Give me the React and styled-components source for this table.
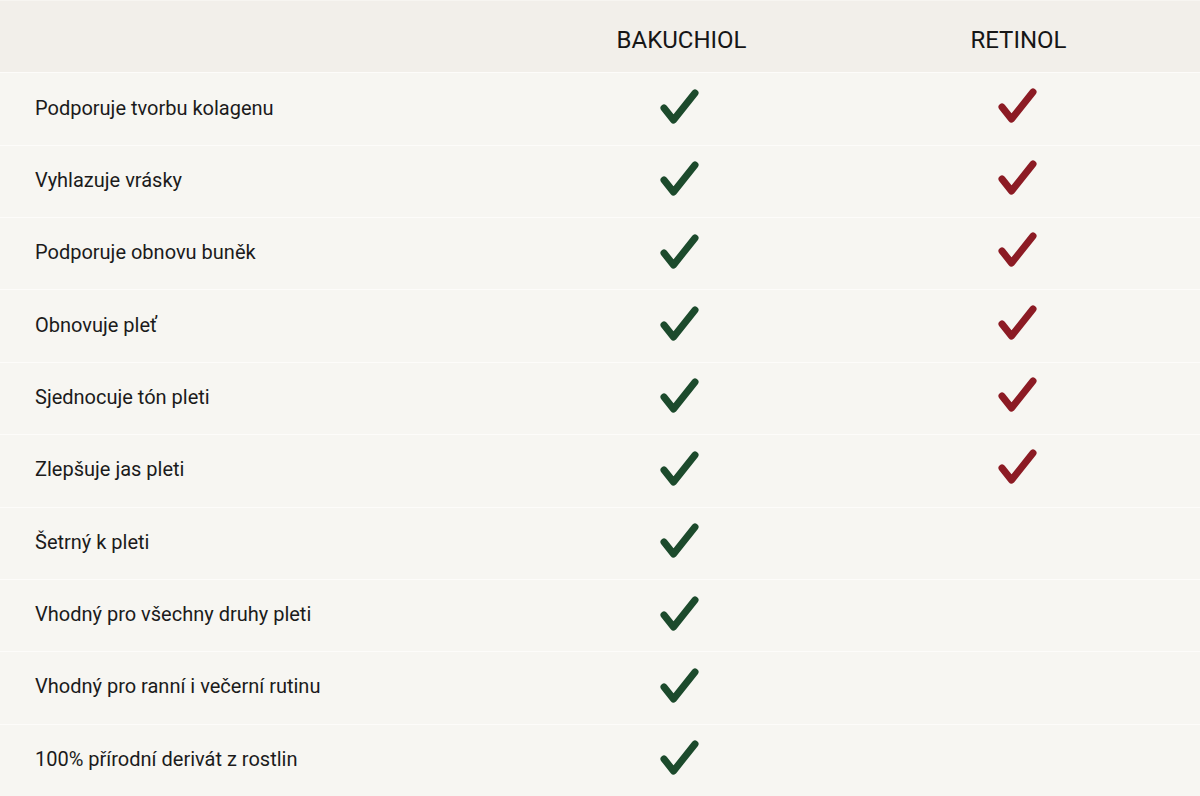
import styled, { createGlobalStyle } from "styled-components"

const rows = [
  { label: "Podporuje tvorbu kolagenu", bakuchiol: true, retinol: true },
  { label: "Vyhlazuje vrásky", bakuchiol: true, retinol: true },
  { label: "Podporuje obnovu buněk", bakuchiol: true, retinol: true },
  { label: "Obnovuje pleť", bakuchiol: true, retinol: true },
  { label: "Sjednocuje tón pleti", bakuchiol: true, retinol: true },
  { label: "Zlepšuje jas pleti", bakuchiol: true, retinol: true },
  { label: "Šetrný k pleti", bakuchiol: true, retinol: false },
  { label: "Vhodný pro všechny druhy pleti", bakuchiol: true, retinol: false },
  { label: "Vhodný pro ranní i večerní rutinu", bakuchiol: true, retinol: false },
  { label: "100% přírodní derivát z rostlin", bakuchiol: true, retinol: false },
]

function Check({ color }) {
  return (
    <svg width="40" height="38" viewBox="0 0 40 38">
      <path
        d="M5 20 L14.5 32 L36 5"
        fill="none"
        stroke={color}
        strokeWidth="7"
        strokeLinecap="round"
        strokeLinejoin="round"
      />
    </svg>
  )
}

export default function App() {
  return (
    <>
      <GlobalStyle />
      <Table>
        <HeaderRow>
          <Cell />
          <HeadCell>BAKUCHIOL</HeadCell>
          <HeadCell>RETINOL</HeadCell>
        </HeaderRow>
        {rows.map(r => (
          <Row key={r.label}>
            <Label>{r.label}</Label>
            <MarkCell $shift={-6} $lift={4}>{r.bakuchiol && <Check color="#1c4a2c" />}</MarkCell>
            <MarkCell $shift={-4} $lift={7}>{r.retinol && <Check color="#8c1b24" />}</MarkCell>
          </Row>
        ))}
      </Table>
    </>
  )
}

const GlobalStyle = createGlobalStyle`
  html, body {
    margin: 0;
    padding: 0;
    background: #f7f6f2;
  }
  body {
    font-family: Roboto, "Liberation Sans", sans-serif;
    color: #1b1b1b;
  }
`
const Table = styled.div`
  display: flex;
  flex-direction: column;
  height: 796px;
  width: 1200px;
`
const Row = styled.div`
  flex: 1;
  display: grid;
  grid-template-columns: 1fr 337px 337px;
  padding-right: 13px;
  align-items: center;
  background: #f7f6f2;
  border-top: 1px solid #fdfcfa;
`
const HeaderRow = styled(Row)`
  background: #f2efea;
  border-top: 1px solid #f7f5f1;
`
const Cell = styled.div``
const HeadCell = styled.div`
  text-align: center;
  font-size: 24px;
  font-weight: 400;
  color: #161616;
  padding-top: 6px;
`
const Label = styled.div`
  padding-left: 35px;
  padding-bottom: 3px;
  font-size: 20px;
  color: #1b1b1b;
`
const MarkCell = styled.div`
  display: flex;
  justify-content: center;
  margin-left: ${p => p.$shift}px;
  margin-top: ${p => -p.$lift}px;
  svg { display: block; }
`
